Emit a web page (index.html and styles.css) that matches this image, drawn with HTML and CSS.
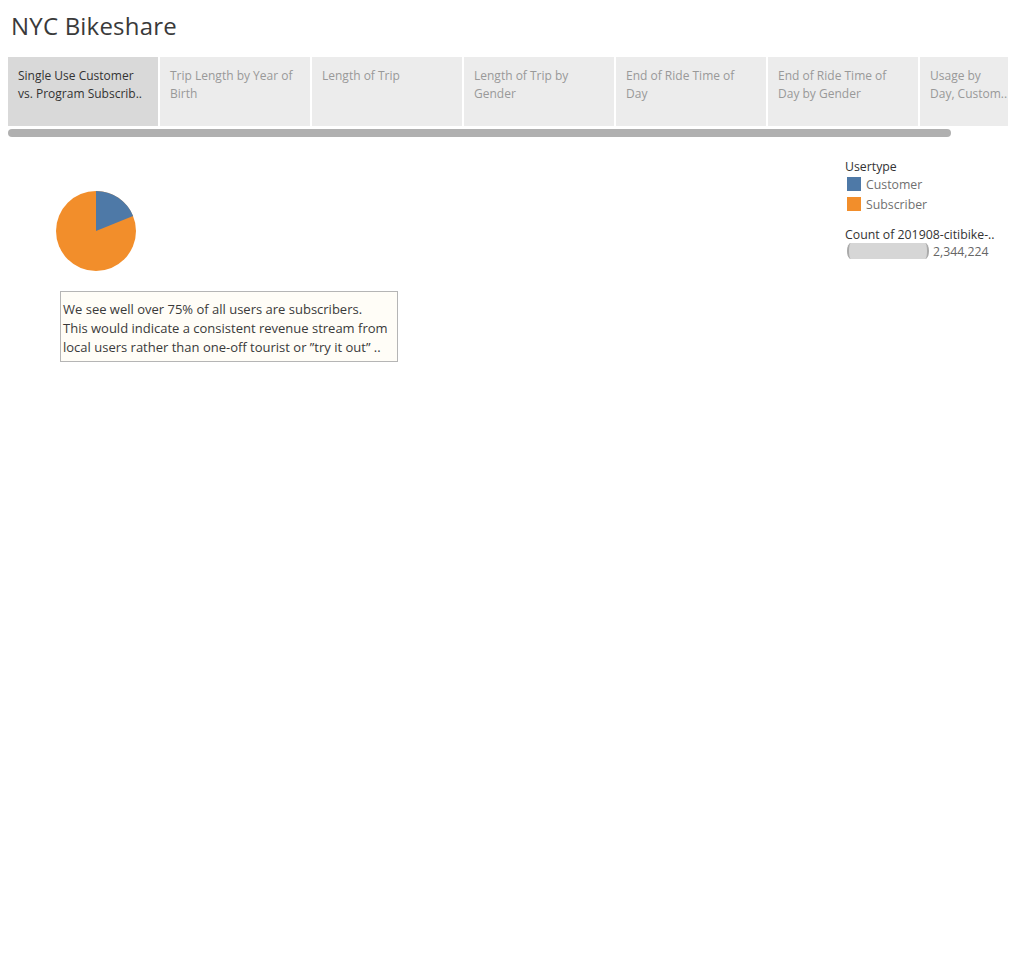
FILE: index.html
```html
<!DOCTYPE html>
<html>
<head>
<meta charset="utf-8">
<link rel="stylesheet" href="styles.css">
</head>
<body>
<div class="page">
  <h1 class="title">NYC Bikeshare</h1>
  <div class="tabs-wrap">
    <div class="tabs">
      <div class="tab active">Single Use Customer<br>vs. Program Subscrib..</div>
      <div class="tab">Trip Length by Year of<br>Birth</div>
      <div class="tab">Length of Trip</div>
      <div class="tab">Length of Trip by<br>Gender</div>
      <div class="tab">End of Ride Time of<br>Day</div>
      <div class="tab">End of Ride Time of<br>Day by Gender</div>
      <div class="tab last">Usage by<br>Day, Custom..</div>
    </div>
    <div class="scrollbar"></div>
  </div>
  <div class="dash">
    <div class="main">
      <svg class="pie" width="82" height="82" viewBox="-41 -41 82 82">
        <circle cx="0" cy="0" r="40" fill="#f28e2b"/>
        <path d="M0 0 L0 -40 A40 40 0 0 1 37.07 -15.02 Z" fill="#4e79a7"/>
      </svg>
      <div class="note">We see well over 75% of all users are subscribers.<br>This would indicate a consistent revenue stream from<br>local users rather than one-off tourist or ”try it out” ..</div>
    </div>
    <div class="legend">
      <div class="leg-title">Usertype</div>
      <div class="leg-item"><span class="sw blue"></span>Customer</div>
      <div class="leg-item"><span class="sw orange"></span>Subscriber</div>
      <div class="leg-title count">Count of 201908-citibike-..</div>
      <div class="size-row"><span class="size-bar"></span><span class="size-val">2,344,224</span></div>
    </div>
  </div>
</div>
</body>
</html>
```
FILE: styles.css
```css
html, body {
  margin: 0;
  padding: 0;
  background: #fff;
}
body {
  font-family: "Open Sans", "Noto Sans", sans-serif;
  color: #333;
}
.page {
  padding: 0 7px 0 8px;
}
.title {
  margin: 0;
  padding: 11px 0 0 3px;
  height: 46px;
  box-sizing: border-box;
  font-weight: 400;
  font-size: 24px;
  line-height: 30px;
  color: #3a3a3a;
  letter-spacing: 0.2px;
}
.tabs-wrap {
  margin-top: 11px;
}
.tabs {
  display: flex;
  gap: 2px;
  overflow: hidden;
  width: 1000px;
}
.tab {
  flex: 0 0 150px;
  height: 69px;
  box-sizing: border-box;
  background: #ececec;
  color: #999;
  font-size: 12px;
  line-height: 18px;
  padding: 10px 0 0 10px;
  white-space: nowrap;
  overflow: hidden;
}
.tab.last {
  flex: 0 0 88px;
}
.tab.active {
  background: #d9d9d9;
  color: #333;
}
.scrollbar {
  margin-top: 3px;
  width: 943px;
  height: 8px;
  border-radius: 4px;
  background: #b0b0b0;
}
.dash {
  display: flex;
  justify-content: space-between;
}
.main {
  padding: 53px 0 0 47px;
}
.pie {
  display: block;
}
.note {
  margin: 19px 0 0 5px;
  width: 338px;
  box-sizing: border-box;
  border: 1px solid #b5b5b5;
  background: #fffdf7;
  padding: 8px 0 4px 2px;
  font-size: 13px;
  line-height: 19px;
  color: #3a3a3a;
  white-space: nowrap;
}
.legend {
  width: 163px;
  padding-top: 22px;
  font-size: 12.3px;
}
.leg-title {
  color: #333;
  line-height: 16px;
  height: 15px;
  white-space: nowrap;
}
.leg-item {
  display: flex;
  align-items: center;
  height: 20px;
  color: #707070;
  padding-left: 2px;
}
.sw {
  width: 14px;
  height: 14px;
  margin-right: 5px;
}
.sw.blue { background: #4e79a7; }
.sw.orange { background: #f28e2b; }
.leg-title.count {
  margin-top: 11px;
  height: 17px;
  line-height: 20px;
}
.size-row {
  display: flex;
  align-items: center;
  padding-left: 2px;
  height: 18px;
  color: #666;
}
.size-bar {
  width: 78px;
  height: 16px;
  background: #d6d6d6;
  border-left: 2px solid #aaa;
  border-right: 2px solid #aaa;
  border-radius: 4px / 8px;
  margin-right: 4px;
}
```
